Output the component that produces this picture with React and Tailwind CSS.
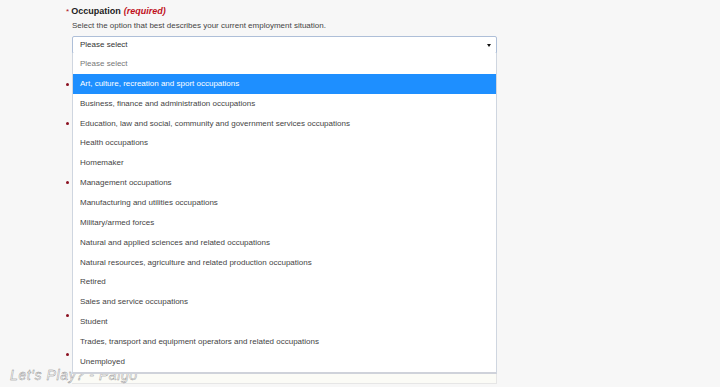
import React from "react";

const options = [
  "Art, culture, recreation and sport occupations",
  "Business, finance and administration occupations",
  "Education, law and social, community and government services occupations",
  "Health occupations",
  "Homemaker",
  "Management occupations",
  "Manufacturing and utilities occupations",
  "Military/armed forces",
  "Natural and applied sciences and related occupations",
  "Natural resources, agriculture and related production occupations",
  "Retired",
  "Sales and service occupations",
  "Student",
  "Trades, transport and equipment operators and related occupations",
  "Unemployed",
];

function Star({ className }) {
  return <div className={"w-[3px] h-[3px] rounded-full bg-[#8a1020] " + className} />;
}

export default function App() {
  return (
    <div
      className="relative w-[720px] h-[387px] overflow-hidden bg-[#f7f7f7] text-[#333]"
      style={{ fontFamily: '"Liberation Sans", Arial, sans-serif' }}
    >
      <div className="flex pl-[66px] pt-[5px]">
        <div className="flex flex-col w-[6px] pt-[78px]">
          <Star className="" />
          <Star className="mt-[36px]" />
          <Star className="mt-[56px]" />
          <Star className="mt-[130px]" />
          <Star className="mt-[36px]" />
        </div>
        <div className="flex flex-col w-[425px]">
          <div className="relative -ml-[6px] flex items-baseline text-[9px] leading-[12px]">
            <span className="text-[#b01020] text-[8px] mr-[2px]">*</span>
            <span className="font-bold text-[#222]">Occupation</span>
            <span className="ml-[3px] font-bold italic text-[#c0101c]">(required)</span>
          </div>
          <div className="mt-[2px] text-[8px] leading-[11px] text-[#444]">
            Select the option that best describes your current employment situation.
          </div>
          <div className="relative mt-[5px]">
            <div className="h-[18px] flex items-center justify-between pl-[7px] pr-[5px] bg-white border border-[#aebfd8] rounded-[2px] text-[8px] text-[#333]">
              <span>Please select</span>
              <svg width="4" height="3" viewBox="0 0 4 3">
                <path d="M0 0H4L2 3Z" fill="#111" />
              </svg>
            </div>
            <div className="absolute left-0 top-[17px] w-[425px] bg-white border-x border-[#cfd6e0] border-b-2 border-b-[#cfd2da] flex flex-col z-10">
              <div className="h-[21px] flex items-center pl-[7px] text-[8px] text-[#777]">Please select</div>
              {options.map((o, i) => (
                <div
                  key={o}
                  className={
                    i === 0
                      ? "h-[19.85px] flex items-center pl-[7px] text-[8px] bg-[#1e8fff] text-white"
                      : "h-[19.85px] flex items-center pl-[7px] text-[8px] text-[#444]"
                  }
                >
                  {o}
                </div>
              ))}
            </div>
            <div className="mt-[1px] h-[329px] border-r border-b border-[#e6e6e6] bg-[#fbfbf6]" />
          </div>
        </div>
      </div>
      <div
        className="absolute left-[10px] top-[365px] text-[14px] italic tracking-[0.6px] text-white [-webkit-text-stroke:0.4px_#888]"
        style={{ fontFamily: '"Liberation Sans", sans-serif' }}
      >
        Let's Play? - Palgo
      </div>
    </div>
  );
}
